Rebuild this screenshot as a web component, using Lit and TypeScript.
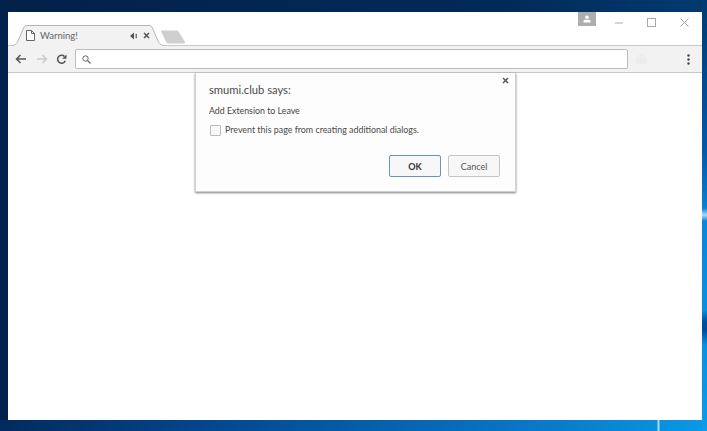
import { LitElement, html, css } from "lit";
import { customElement } from "lit/decorators.js";

@customElement("app-root")
export class AppRoot extends LitElement {
  static styles = css`
    :host {
      display: block;
      width: 707px;
      height: 431px;
      overflow: hidden;
      font-family: "Lato", "Open Sans", sans-serif;
      color: #333;
    }
    .desktop {
      box-sizing: border-box;
      width: 707px;
      height: 431px;
      padding: 12px 5px 11px 8px;
      display: flex;
      background:
        linear-gradient(90deg, transparent 657px, #9fdcf5 658px, #9fdcf5 659px, transparent 660px) left bottom / 100% 11px no-repeat,
        linear-gradient(180deg, #023a70 0, #0558a8 150px, #0a80d0 208px, #a5dcf5 215px, #0a86d8 221px, #0a90e0 310px, #004c9c 322px, #004c9c 330px, #0a90e0 345px, #0b9cea 431px) right top / 5px 100% no-repeat,
        linear-gradient(90deg, #022b5e 0, #03458c 200px, #0a7bcb 557px, #0b98e6 707px) left bottom / 100% 11px no-repeat,
        linear-gradient(90deg, #02214b 0, #022a58 500px, #013a70 707px);
    }
    .window {
      flex: 1;
      display: flex;
      flex-direction: column;
      background: #fff;
      position: relative;
    }
    .strip {
      height: 34px;
      box-sizing: border-box;
      border-bottom: 1px solid #c9c9c9;
      display: flex;
      align-items: flex-end;
      padding-left: 5px;
      background: #fff;
    }
    .tab {
      width: 150px;
      height: 21px;
      margin-bottom: -1px;
      position: relative;
      display: flex;
      align-items: center;
      box-sizing: border-box;
      padding: 0 13px 0 13px;
      font-size: 9.5px;
      color: #666;
    }
    .tab-bg { position: absolute; inset: 0; }
    .tab > *:not(.tab-bg) { position: relative; }
    .tab-title { margin-left: 5px; flex: 1; }
    .newtab { margin: 0 0 1px -3px; align-self: flex-end; display: block; }
    .controls {
      margin-left: auto;
      align-self: flex-start;
      display: flex;
      align-items: flex-start;
      padding-right: 1px;
    }
    .avatar {
      width: 18px;
      height: 14px;
      background: #aeaeae;
      display: flex;
      align-items: center;
      justify-content: center;
      margin-right: 6px;
    }
    .ctl {
      width: 33px;
      height: 21px;
      display: flex;
      align-items: center;
      justify-content: center;
    }
    .toolbar {
      height: 26px;
      box-sizing: border-box;
      background: #f2f2f2;
      display: flex;
      align-items: center;
      padding: 0 12px 0 7px;
    }
    .nav { width: 20.5px; display: flex; justify-content: flex-start; }
    .nav.last { width: 19px; }
    .omni {
      flex: 1;
      height: 20px;
      box-sizing: border-box;
      background: #fff;
      border: 1px solid #bdbdbd;
      border-radius: 2px;
      display: flex;
      align-items: center;
      padding-left: 6px;
    }
    .ext { margin: 0 39px 0 7px; display: block; }
    .page {
      flex: 1;
      border-top: 1px solid #c6c6c6;
      background: #fff;
    }
    .dialog {
      position: absolute;
      left: 187px;
      top: 61px;
      width: 321px;
      height: 119px;
      box-sizing: border-box;
      background: #fdfdfd;
      border: 1px solid #d0d0d0;
      border-top: none;
      box-shadow: 0 1px 2px rgba(0, 0, 0, 0.5);
      padding: 9px 15px 0 13px;
      display: flex;
      flex-direction: column;
    }
    .close {
      position: absolute;
      right: 6px;
      top: 4px;
      display: block;
    }
    .title { font-size: 11.2px; line-height: 15px; color: #4a4a4a; }
    .msg { font-size: 8.8px; line-height: 12px; margin-top: 8px; color: #444; }
    .check-row {
      display: flex;
      align-items: center;
      margin-top: 7px;
      font-size: 8.9px;
      line-height: 12px;
      color: #4a4a4a;
    }
    .box {
      width: 9px;
      height: 9px;
      margin: 0 4px 0 1px;
      border: 1px solid #bbb;
      border-radius: 1px;
      background: #f8f8f8;
    }
    .buttons {
      display: flex;
      justify-content: flex-end;
      gap: 7px;
      margin-top: 19px;
    }
    .btn {
      width: 52px;
      height: 22px;
      box-sizing: border-box;
      display: flex;
      align-items: center;
      justify-content: center;
      font-size: 9px;
      border: 1px solid #c4c4c4;
      border-radius: 2px;
      background: #f7f7f7;
      color: #555;
    }
    .ok {
      border-color: #6f93b8;
      font-weight: 700;
      color: #333;
    }
  `;

  render() {
    return html`
      <div class="desktop">
        <div class="window">
          <div class="strip">
            <div class="tab">
              <svg class="tab-bg" width="150" height="21" viewBox="0 0 150 21">
                <path d="M0 20.500 C3 20 4 18 5 16 L11 2 C11.500 1 12 .5 14 .5 L136 .5 C138 .5 138.500 1 139 2 L145 16 C146 18 147 20 150 20.500 Z" fill="#f2f2f2" stroke="#b5b5b5" />
                <path d="M1 21 H149" stroke="#f2f2f2" stroke-width="2" />
              </svg>
              <svg width="9" height="11" viewBox="0 0 9 11">
                <path d="M.5.5 H5.500 L8.500 3.500 V10.500 H.5 Z M5.500 .5 V3.500 H8.500" fill="#fff" stroke="#666" />
              </svg>
              <span class="tab-title">Warning!</span>
              <svg width="9" height="8" viewBox="0 0 9 8" style="margin-right:4px">
                <path d="M0 4 L4 .5 V7.500 Z" fill="#555" />
                <path d="M5.500 1.800 H7 V6.200 H5.500 Z" fill="#777" />
              </svg>
              <svg width="7" height="7" viewBox="0 0 7 7">
                <path d="M1 1 L6 6 M6 1 L1 6" stroke="#555" stroke-width="1.500" />
              </svg>
            </div>
            <svg class="newtab" width="27" height="14" viewBox="0 0 27 14">
              <path d="M1 1.500 Q1 .5 2 .5 H17 Q18 .5 18.500 1.500 L25 12 Q25.500 13.500 24 13.500 H8 Q7 13.500 6.500 12.500 Z" fill="#cfcfcf" />
            </svg>
            <div class="controls">
              <div class="avatar">
                <svg width="8" height="8" viewBox="0 0 8 8">
                  <circle cx="4" cy="2.200" r="1.800" fill="#fff" />
                  <path d="M.5 7.500 V6 Q.5 4.800 2 4.800 H6 Q7.500 4.800 7.500 6 V7.500 Z" fill="#fff" />
                </svg>
              </div>
              <div class="ctl"><svg width="8" height="2" viewBox="0 0 8 2"><path d="M0 1 H8" stroke="#aaa" /></svg></div>
              <div class="ctl"><svg width="9" height="9" viewBox="0 0 9 9"><rect x=".5" y=".5" width="8" height="8" fill="none" stroke="#aaa" /></svg></div>
              <div class="ctl"><svg width="9" height="9" viewBox="0 0 9 9"><path d="M.5 .5 L8.500 8.500 M8.500 .5 L.5 8.500" stroke="#aaa" /></svg></div>
            </div>
          </div>
          <div class="toolbar">
            <div class="nav">
              <svg width="12" height="10" viewBox="0 0 12 10"><path d="M11 5 H2 M5.500 1 L1.500 5 L5.500 9" fill="none" stroke="#555" stroke-width="1.500" /></svg>
            </div>
            <div class="nav">
              <svg width="12" height="10" viewBox="0 0 12 10"><path d="M1 5 H10 M6.500 1 L10.500 5 L6.500 9" fill="none" stroke="#c9c9c9" stroke-width="1.500" /></svg>
            </div>
            <div class="nav last">
              <svg width="11" height="11" viewBox="0 0 11 11"><path d="M9.300 6.800 A4 4 0 1 1 8.500 2.500" fill="none" stroke="#555" stroke-width="1.500" /><path d="M10.500 .5 V4.800 H6.200 Z" fill="#555" /></svg>
            </div>
            <div class="omni">
              <svg width="9" height="9" viewBox="0 0 9 9"><circle cx="3.500" cy="3.500" r="2.700" fill="none" stroke="#666" /><path d="M5.500 5.500 L8.500 8.500" stroke="#666" stroke-width="1.300" /></svg>
            </div>
            <svg class="ext" width="13" height="10" viewBox="0 0 13 10"><path d="M1 10 V3 H4 V0 H9 V3 H12 V10 Z" fill="#ececec" /></svg>
            <svg width="3" height="11" viewBox="0 0 3 11"><circle cx="1.500" cy="1.500" r="1.200" fill="#444" /><circle cx="1.500" cy="5.500" r="1.200" fill="#444" /><circle cx="1.500" cy="9.500" r="1.200" fill="#444" /></svg>
          </div>
          <div class="page"></div>
          <div class="dialog">
            <svg class="close" width="7" height="7" viewBox="0 0 7 7"><path d="M1 1 L6 6 M6 1 L1 6" stroke="#555" stroke-width="1.500" /></svg>
            <div class="title">smumi.club says:</div>
            <div class="msg">Add Extension to Leave</div>
            <div class="check-row"><span class="box"></span><span>Prevent this page from creating additional dialogs.</span></div>
            <div class="buttons">
              <div class="btn ok">OK</div>
              <div class="btn">Cancel</div>
            </div>
          </div>
        </div>
      </div>
    `;
  }
}
